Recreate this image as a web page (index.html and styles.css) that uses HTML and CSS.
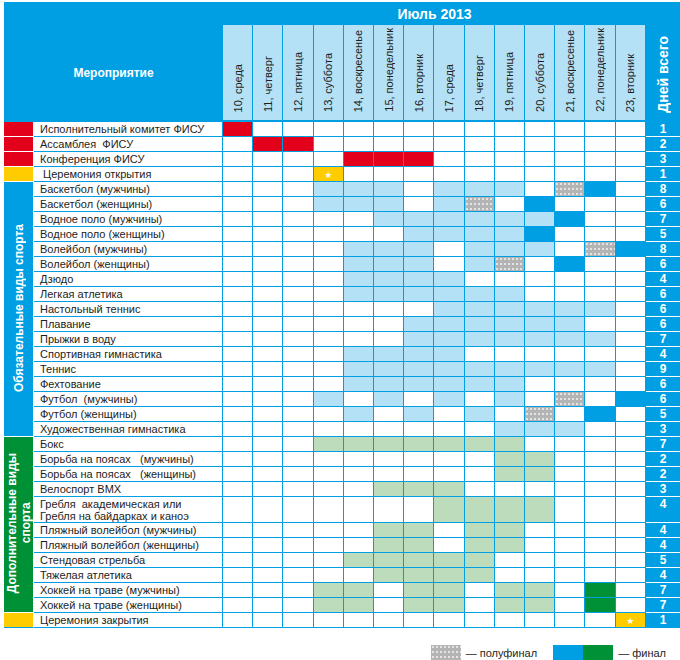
FILE: index.html
```html
<!DOCTYPE html>
<html lang="ru">
<head>
    <meta charset="UTF-8">
    <title>Универсиада — Июль 2013</title>
    <link rel="stylesheet" href="styles.css">
</head>
<body>

<div class="page">
    <table class="schedule">
        <colgroup>
            <col class="col-mark">
            <col class="col-name">
            <col><col><col><col><col><col><col><col><col><col><col><col><col><col>
            <col class="col-total">
        </colgroup>
        <thead>
            <tr class="head-top">
                <th colspan="2"></th>
                <th colspan="14" class="month">Июль 2013</th>
                <th rowspan="2" class="head-total"><span>Дней всего</span></th>
            </tr>
            <tr class="head-days">
                <th colspan="2" class="event">Мероприятие</th>
                <th class="day"><span>10, среда</span></th>
                <th class="day"><span>11, четверг</span></th>
                <th class="day"><span>12, пятница</span></th>
                <th class="day"><span>13, суббота</span></th>
                <th class="day"><span>14, воскресенье</span></th>
                <th class="day"><span>15, понедельник</span></th>
                <th class="day"><span>16, вторник</span></th>
                <th class="day"><span>17, среда</span></th>
                <th class="day"><span>18, четверг</span></th>
                <th class="day"><span>19, пятница</span></th>
                <th class="day"><span>20, суббота</span></th>
                <th class="day"><span>21, воскресенье</span></th>
                <th class="day"><span>22, понедельник</span></th>
                <th class="day"><span>23, вторник</span></th>
            </tr>
        </thead>
        <tbody>
            <!-- ФИСУ -->
            <tr><td class="m r"></td><td class="nm">Исполнительный комитет ФИСУ</td><td class="r"></td><td></td><td></td><td></td><td></td><td></td><td></td><td></td><td></td><td></td><td></td><td></td><td></td><td></td><td class="t">1</td></tr>
            <tr><td class="m r"></td><td class="nm">Ассамблея  ФИСУ</td><td></td><td class="r"></td><td class="r"></td><td></td><td></td><td></td><td></td><td></td><td></td><td></td><td></td><td></td><td></td><td></td><td class="t">2</td></tr>
            <tr><td class="m r"></td><td class="nm">Конференция ФИСУ</td><td></td><td></td><td></td><td></td><td class="r"></td><td class="r"></td><td class="r"></td><td></td><td></td><td></td><td></td><td></td><td></td><td></td><td class="t">3</td></tr>
            <tr><td class="m y"></td><td class="nm"> Церемония открытия</td><td></td><td></td><td></td><td class="y"><span class="star">★</span></td><td></td><td></td><td></td><td></td><td></td><td></td><td></td><td></td><td></td><td></td><td class="t">1</td></tr>

            <!-- Обязательные виды спорта -->
            <tr><td class="m band blue" rowspan="17"><span>Обязательные виды спорта</span></td><td class="nm">Баскетбол (мужчины)</td><td></td><td></td><td></td><td class="l"></td><td class="l"></td><td class="l"></td><td></td><td class="l"></td><td class="l"></td><td class="l"></td><td></td><td class="s"></td><td class="f"></td><td></td><td class="t">8</td></tr>
            <tr><td class="nm">Баскетбол (женщины)</td><td></td><td></td><td></td><td class="l"></td><td class="l"></td><td class="l"></td><td></td><td class="l"></td><td class="s"></td><td></td><td class="f"></td><td></td><td></td><td></td><td class="t">6</td></tr>
            <tr><td class="nm">Водное поло (мужчины)</td><td></td><td></td><td></td><td></td><td></td><td class="l"></td><td class="l"></td><td class="l"></td><td class="l"></td><td class="l"></td><td class="l"></td><td class="f"></td><td></td><td></td><td class="t">7</td></tr>
            <tr><td class="nm">Водное поло (женщины)</td><td></td><td></td><td></td><td></td><td></td><td></td><td class="l"></td><td class="l"></td><td class="l"></td><td class="l"></td><td class="f"></td><td></td><td></td><td></td><td class="t">5</td></tr>
            <tr><td class="nm">Волейбол (мужчины)</td><td></td><td></td><td></td><td></td><td class="l"></td><td class="l"></td><td class="l"></td><td></td><td class="l"></td><td class="l"></td><td class="l"></td><td></td><td class="s"></td><td class="f"></td><td class="t">8</td></tr>
            <tr><td class="nm">Волейбол (женщины)</td><td></td><td></td><td></td><td></td><td class="l"></td><td class="l"></td><td class="l"></td><td></td><td class="l"></td><td class="s"></td><td></td><td class="f"></td><td></td><td></td><td class="t">6</td></tr>
            <tr><td class="nm">Дзюдо</td><td></td><td></td><td></td><td></td><td class="l"></td><td class="l"></td><td class="l"></td><td class="l"></td><td></td><td></td><td></td><td></td><td></td><td></td><td class="t">4</td></tr>
            <tr><td class="nm">Легкая атлетика</td><td></td><td></td><td></td><td></td><td class="l"></td><td class="l"></td><td class="l"></td><td class="l"></td><td class="l"></td><td class="l"></td><td></td><td></td><td></td><td></td><td class="t">6</td></tr>
            <tr><td class="nm">Настольный теннис</td><td></td><td></td><td></td><td></td><td></td><td></td><td></td><td class="l"></td><td class="l"></td><td class="l"></td><td class="l"></td><td class="l"></td><td class="l"></td><td></td><td class="t">6</td></tr>
            <tr><td class="nm">Плавание</td><td></td><td></td><td></td><td></td><td></td><td></td><td class="l"></td><td class="l"></td><td class="l"></td><td class="l"></td><td class="l"></td><td class="l"></td><td></td><td></td><td class="t">6</td></tr>
            <tr><td class="nm">Прыжки в воду</td><td></td><td></td><td></td><td></td><td></td><td></td><td class="l"></td><td class="l"></td><td class="l"></td><td class="l"></td><td class="l"></td><td class="l"></td><td class="l"></td><td></td><td class="t">7</td></tr>
            <tr><td class="nm">Спортивная гимнастика</td><td></td><td></td><td></td><td></td><td class="l"></td><td class="l"></td><td class="l"></td><td class="l"></td><td></td><td></td><td></td><td></td><td></td><td></td><td class="t">4</td></tr>
            <tr><td class="nm">Теннис</td><td></td><td></td><td></td><td></td><td class="l"></td><td class="l"></td><td class="l"></td><td class="l"></td><td class="l"></td><td class="l"></td><td class="l"></td><td class="l"></td><td class="l"></td><td></td><td class="t">9</td></tr>
            <tr><td class="nm">Фехтование</td><td></td><td></td><td></td><td></td><td class="l"></td><td class="l"></td><td class="l"></td><td class="l"></td><td class="l"></td><td class="l"></td><td></td><td></td><td></td><td></td><td class="t">6</td></tr>
            <tr><td class="nm">Футбол  (мужчины)</td><td></td><td></td><td></td><td class="l"></td><td></td><td class="l"></td><td></td><td class="l"></td><td></td><td class="l"></td><td></td><td class="s"></td><td></td><td class="f"></td><td class="t">6</td></tr>
            <tr><td class="nm">Футбол (женщины)</td><td></td><td></td><td></td><td></td><td class="l"></td><td></td><td class="l"></td><td></td><td class="l"></td><td></td><td class="s"></td><td></td><td class="f"></td><td></td><td class="t">5</td></tr>
            <tr><td class="nm">Художественная гимнастика</td><td></td><td></td><td></td><td></td><td></td><td></td><td></td><td></td><td></td><td class="l"></td><td class="l"></td><td class="l"></td><td></td><td></td><td class="t">3</td></tr>

            <!-- Дополнительные виды спорта -->
            <tr><td class="m band green" rowspan="11"><span>Дополнительные виды<br>спорта</span></td><td class="nm">Бокс</td><td></td><td></td><td></td><td class="g"></td><td class="g"></td><td class="g"></td><td class="g"></td><td class="g"></td><td class="g"></td><td class="g"></td><td></td><td></td><td></td><td></td><td class="t">7</td></tr>
            <tr><td class="nm">Борьба на поясах   (мужчины)</td><td></td><td></td><td></td><td></td><td></td><td></td><td></td><td></td><td></td><td class="g"></td><td class="g"></td><td></td><td></td><td></td><td class="t">2</td></tr>
            <tr><td class="nm">Борьба на поясах   (женщины)</td><td></td><td></td><td></td><td></td><td></td><td></td><td></td><td></td><td></td><td class="g"></td><td class="g"></td><td></td><td></td><td></td><td class="t">2</td></tr>
            <tr><td class="nm">Велоспорт BMX</td><td></td><td></td><td></td><td></td><td></td><td class="g"></td><td class="g"></td><td class="g"></td><td></td><td></td><td></td><td></td><td></td><td></td><td class="t">3</td></tr>
            <tr class="double"><td class="nm">Гребля  академическая или<br>Гребля на байдарках и каноэ</td><td></td><td></td><td></td><td></td><td></td><td></td><td></td><td class="g"></td><td class="g"></td><td class="g"></td><td class="g"></td><td></td><td></td><td></td><td class="t">4</td></tr>
            <tr><td class="nm">Пляжный волейбол (мужчины)</td><td></td><td></td><td></td><td></td><td></td><td class="g"></td><td class="g"></td><td></td><td class="g"></td><td class="g"></td><td></td><td></td><td></td><td></td><td class="t">4</td></tr>
            <tr><td class="nm">Пляжный волейбол (женщины)</td><td></td><td></td><td></td><td></td><td></td><td class="g"></td><td class="g"></td><td></td><td class="g"></td><td class="g"></td><td></td><td></td><td></td><td></td><td class="t">4</td></tr>
            <tr><td class="nm">Стендовая стрельба</td><td></td><td></td><td></td><td></td><td class="g"></td><td class="g"></td><td class="g"></td><td class="g"></td><td class="g"></td><td></td><td></td><td></td><td></td><td></td><td class="t">5</td></tr>
            <tr><td class="nm">Тяжелая атлетика</td><td></td><td></td><td></td><td></td><td></td><td class="g"></td><td class="g"></td><td class="g"></td><td class="g"></td><td></td><td></td><td></td><td></td><td></td><td class="t">4</td></tr>
            <tr><td class="nm">Хоккей на траве (мужчины)</td><td></td><td></td><td></td><td class="g"></td><td class="g"></td><td></td><td class="g"></td><td class="g"></td><td></td><td class="g"></td><td class="g"></td><td></td><td class="d"></td><td></td><td class="t">7</td></tr>
            <tr><td class="nm">Хоккей на траве (женщины)</td><td></td><td></td><td></td><td class="g"></td><td class="g"></td><td></td><td class="g"></td><td class="g"></td><td></td><td class="g"></td><td class="g"></td><td></td><td class="d"></td><td></td><td class="t">7</td></tr>

            <tr class="last"><td class="m y"></td><td class="nm">Церемония закрытия</td><td></td><td></td><td></td><td></td><td></td><td></td><td></td><td></td><td></td><td></td><td></td><td></td><td></td><td class="y"><span class="star">★</span></td><td class="t">1</td></tr>
        </tbody>
    </table>

    <!-- Legend -->
    <div class="legend">
        <span class="key s"></span>
        <span class="key-text">— полуфинал</span>
        <span class="key f"></span><span class="key d"></span>
        <span class="key-text">— финал</span>
    </div>
</div>

</body>
</html>
```

FILE: styles.css
```css
body {
    margin: 0;
    font-family: "Liberation Sans", Arial, sans-serif;
    background-color: #fff;
    color: #1d1d1b;
}

.page {
    padding: 2px 0 0 4px;
}

.schedule {
    border-collapse: separate;
    border-spacing: 0;
    table-layout: fixed;
    width: 676px;
    font-size: 11px;
    line-height: 12px;
}

.col-mark { width: 30px; }
.col-name { width: 189px; }
.col-total { width: 34px; }

.schedule th,
.schedule td {
    padding: 0;
}

/* header */
.head-top {
    height: 23px;
}

.head-top th {
    background-color: #009fe3;
    color: #fff;
}

.month {
    font-size: 14px;
    font-weight: bold;
    text-align: center;
}

.head-days {
    height: 97px;
}

.head-days th {
    border-bottom: 2px solid #009fe3;
}

.event {
    background-color: #009fe3;
    color: #fff;
    font-size: 12px;
    font-weight: bold;
    text-align: center;
}

.day {
    background-color: #b4e1f6;
    border-right: 1px solid #009fe3;
    font-weight: normal;
    text-align: center;
    vertical-align: bottom;
}

.day span,
.head-total span,
.band span {
    display: inline-block;
    writing-mode: vertical-rl;
    transform: rotate(180deg);
    white-space: nowrap;
}

.day span {
    margin-bottom: 6px;
}

.head-total {
    background-color: #009fe3;
    color: #fff;
    font-size: 14px;
    font-weight: bold;
    text-align: center;
    vertical-align: bottom;
}

.head-total span {
    line-height: 16px;
    margin-bottom: 8px;
}

/* body */
.schedule tbody tr {
    height: 15px;
}

.schedule tbody tr.double {
    height: 26px;
}

.schedule tbody td {
    border-right: 1px solid #009fe3;
    border-bottom: 1px solid #009fe3;
}

.schedule tbody td.nm {
    padding-left: 6px;
    white-space: pre;
    overflow: hidden;
}

.schedule tbody td.m {
    border-right: 1px solid #fff;
    border-bottom: 1px solid #fff;
}

.schedule tbody tr.last td {
    border-bottom-color: #009fe3;
}

.band {
    color: #fff;
    font-size: 12px;
    font-weight: bold;
    text-align: center;
}

.band span {
    line-height: 14px;
    text-align: center;
}

.blue { background-color: #009fe3; }
.green { background-color: #009036; }

.schedule tbody td.t {
    background-color: #009fe3;
    color: #fff;
    font-size: 12px;
    font-weight: bold;
    text-align: center;
    border-right: none;
    border-bottom: 1px solid #fff;
}

.schedule tbody tr.double td.t {
    vertical-align: top;
    padding-top: 1px;
}

/* cell fills */
.r { background-color: #e3001b; }
.y { background-color: #ffcc00; text-align: center; }
.l { background-color: #b4e1f6; }
.f { background-color: #009fe3; }
.g { background-color: #bcdcbc; }
.d { background-color: #009036; }
.s {
    background-color: #b4b4b4;
    background-image: radial-gradient(circle at 2px 2px, #e4e4e4 0.7px, transparent 1.1px);
    background-size: 4px 5px;
}

.star {
    font-family: "DejaVu Sans", sans-serif;
    font-size: 9px;
    line-height: 10px;
    color: #fff;
}

/* legend */
.legend {
    display: flex;
    justify-content: flex-end;
    align-items: center;
    margin-top: 17px;
    padding-right: 14px;
    font-size: 11px;
}

.key {
    display: inline-block;
    width: 30px;
    height: 15px;
}

.key-text {
    margin-left: 5px;
    margin-right: 16px;
}

.key-text:last-child {
    margin-right: 0;
}
```
